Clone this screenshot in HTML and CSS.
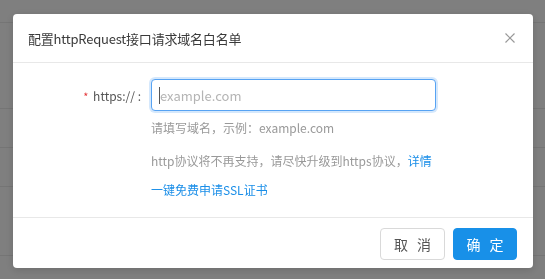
FILE: index.html
```html
<!DOCTYPE html>
<html lang="zh-CN">
  <head>
    <meta charset="utf-8">
    <title>配置httpRequest接口请求域名白名单</title>
    <link rel="stylesheet" href="styles.css">
  </head>
  <body>
    <div class="page">
      <div class="row row-top"></div>
      <div class="row row-tall"></div>
      <div class="row"></div>
      <div class="row"></div>
      <div class="row row-tall2"></div>
    </div>

    <div class="mask">
      <div class="dialog">
        <div class="dialog-header">
          <span class="dialog-title">配置httpRequest接口请求域名白名单</span>
          <a class="dialog-close">
            <svg width="10" height="10" viewBox="0 0 10 10">
              <path d="M0.5 0.5 L9.5 9.5 M9.5 0.5 L0.5 9.5" stroke="#999" stroke-width="1.2" fill="none"/>
            </svg>
          </a>
        </div>
        <div class="dialog-body">
          <div class="form-row">
            <label class="form-label"><span class="required">*</span> https:// :</label>
            <div class="form-field">
              <div class="input-wrap">
                <input class="domain-input" type="text" placeholder="example.com">
                <span class="caret"></span>
              </div>
              <div class="hint">请填写域名，示例：example.com</div>
              <div class="notice">http协议将不再支持，请尽快升级到https协议，<a class="link">详情</a></div>
              <div class="notice-link"><a class="link">一键免费申请SSL证书</a></div>
            </div>
          </div>
        </div>
        <div class="dialog-footer">
          <button class="btn btn-cancel">取消</button>
          <button class="btn btn-primary">确定</button>
        </div>
      </div>
    </div>
  </body>
</html>
```

FILE: styles.css
```css
body {
    margin: 0;
    font-family: "Noto Sans CJK SC", "Noto Sans", sans-serif;
    background-color: #fff;
    overflow: hidden;
}

.page {
    height: 279px;
}

.row {
    height: 38px;
    border-bottom: 1px solid #ebebeb;
}

.row-top {
    height: 22px;
}

.row-tall {
    height: 85px;
}

.row-tall2 {
    height: 68px;
}

.mask {
    position: fixed;
    top: 0;
    left: 0;
    right: 0;
    bottom: 0;
    background-color: rgba(0, 0, 0, 0.5);
}

.dialog {
    position: absolute;
    left: 13px;
    top: 14px;
    width: 520px;
    height: 254px;
    background-color: #fff;
    border-radius: 4px;
    box-shadow: 0 2px 8px rgba(0, 0, 0, 0.15);
    display: flex;
    flex-direction: column;
}

.dialog-header {
    height: 48px;
    padding: 0 18px 0 15px;
    border-bottom: 1px solid #e8e8e8;
    display: flex;
    align-items: center;
    justify-content: space-between;
}

.dialog-title {
    font-size: 13px;
    color: #3a3a3a;
    letter-spacing: -0.2px;
}

.dialog-close {
    display: flex;
    cursor: pointer;
}

.dialog-body {
    flex: 1;
    padding-top: 16px;
}

.form-row {
    display: flex;
}

.form-label {
    width: 130px;
    margin-right: 8px;
    padding-right: 2px;
    box-sizing: border-box;
    height: 32px;
    line-height: 33px;
    text-align: right;
    font-size: 12px;
    color: #555;
}

.required {
    color: #e4393c;
    font-size: 11px;
    margin-right: 2px;
}

.input-wrap {
    position: relative;
}

.domain-input {
    box-sizing: border-box;
    width: 285px;
    height: 32px;
    padding: 0 8px;
    border: 1px solid #57a3f3;
    border-radius: 4px;
    box-shadow: 0 0 0 2px rgba(45, 140, 240, 0.2);
    font-family: inherit;
    font-size: 13px;
    color: #333;
    outline: none;
    display: block;
}

.domain-input::placeholder {
    color: #b4b4b4;
}

.caret {
    position: absolute;
    left: 8px;
    top: 8px;
    width: 1px;
    height: 17px;
    background-color: #555;
}

.hint {
    margin-top: 8px;
    line-height: 18px;
    font-size: 12px;
    color: #999;
}

.notice {
    margin-top: 15px;
    line-height: 18px;
    font-size: 12px;
    color: #999;
}

.notice-link {
    margin-top: 11px;
    line-height: 18px;
    font-size: 12px;
}

.link {
    color: #1a8ee8;
    text-decoration: none;
    cursor: pointer;
}

.dialog-footer {
    height: 51px;
    box-sizing: border-box;
    padding: 10px 16px 0 0;
    border-top: 1px solid #e8e8e8;
    display: flex;
    justify-content: flex-end;
    gap: 8px;
}

.btn {
    height: 32px;
    border-radius: 4px;
    font-family: inherit;
    font-size: 14px;
    letter-spacing: 9px;
    padding: 0 0 0 9px;
    cursor: pointer;
}

.btn-cancel {
    width: 65px;
    background-color: #fff;
    border: 1px solid #d9d9d9;
    color: #555;
}

.btn-primary {
    width: 64px;
    background-color: #1890e8;
    border: 1px solid #1890e8;
    color: #fff;
}
```
